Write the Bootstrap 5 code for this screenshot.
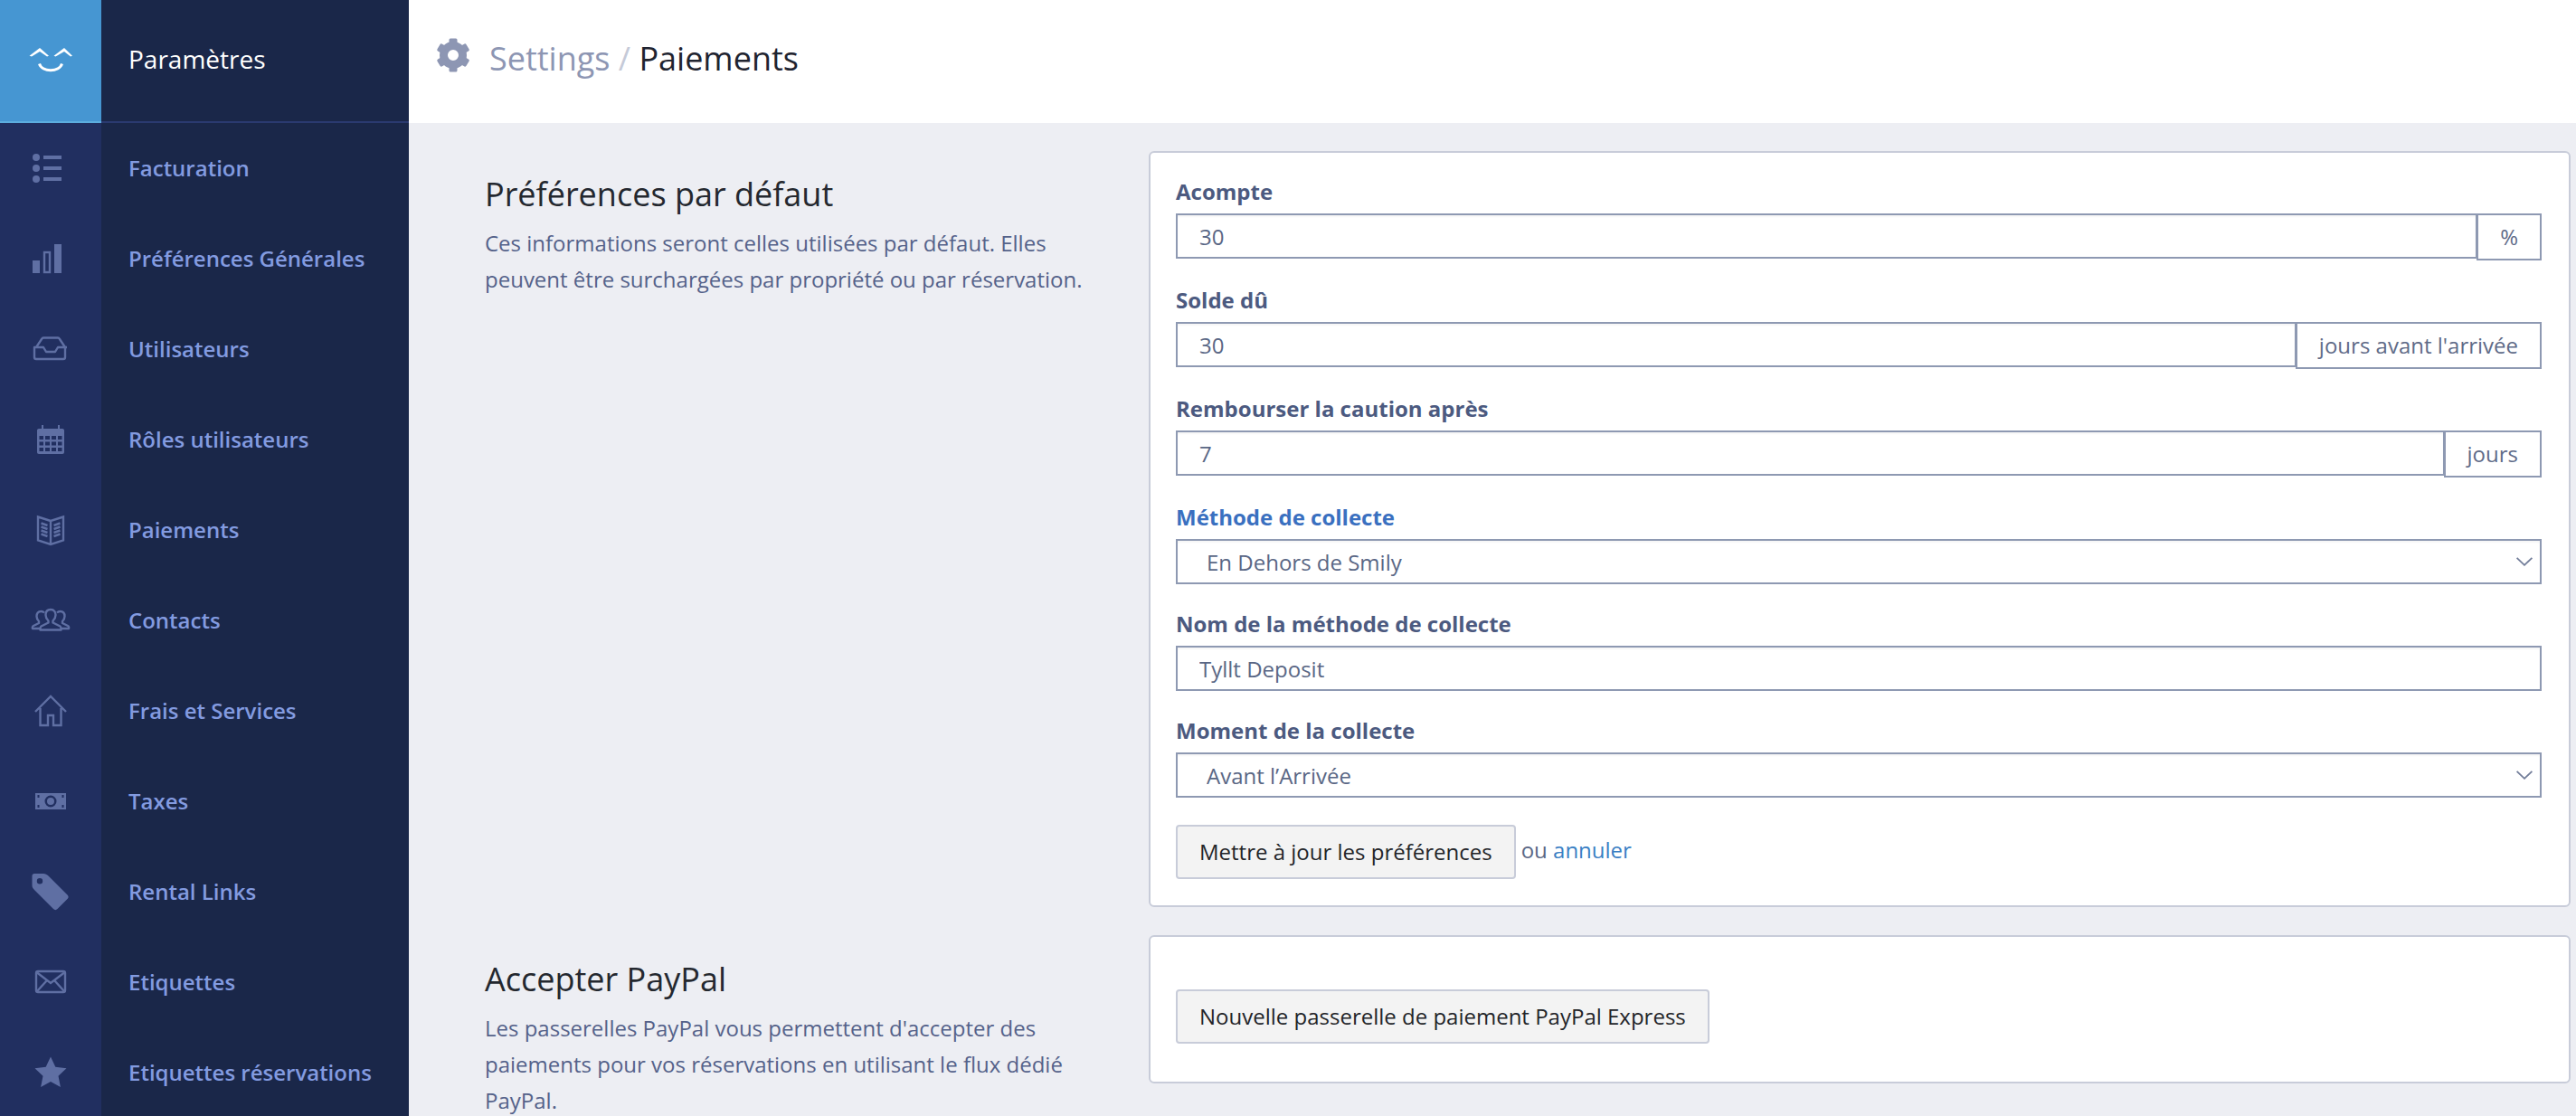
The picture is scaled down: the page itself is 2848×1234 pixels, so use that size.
<!DOCTYPE html>
<html lang="fr">
<head>
<meta charset="utf-8">
<title>Paiements</title>
<link href="https://cdn.jsdelivr.net/npm/bootstrap@5.3.0/dist/css/bootstrap.min.css" rel="stylesheet">
<style>
html,body{height:100%;}
body{font-family:"Open Sans","Liberation Sans",sans-serif;background:#edeef3;font-size:24px;color:#4c5a80;overflow:hidden;}
.app-shell{height:1234px;overflow:hidden;}
.side{width:452px;flex:0 0 452px;background:#1a2749;}
.side-top{height:136px;flex:0 0 136px;border-bottom:2px solid #2a3a70;}
.logo-box{width:112px;background:#4696d2;border-bottom:2px solid #5cadde;margin-bottom:-2px;}
.side-title{color:#fff;font-size:28px;padding-left:30px;margin-top:-4px;}
.side-row{height:100px;flex:0 0 100px;}
.rail-cell{width:112px;background:#212f60;}
.rail-cell svg{width:48px;height:48px;fill:#5f6fa3;stroke:none;}
.rail-cell svg .ln{fill:none;stroke:#5f6fa3;stroke-width:2.4;}
.side-link{color:#839be0;font-weight:600;font-size:24px;padding-left:30px;text-decoration:none;}
.topbar{height:136px;flex:0 0 136px;background:#fff;padding-left:30px;}
.crumb{font-size:36px;line-height:1;color:#8d96b3;margin-top:-6px;}
.crumb-sep{color:#c5cad8;}
.crumb-now{color:#1f2430;}
.gear{width:38px;height:38px;fill:#8d96b3;margin-right:21px;margin-top:-14px;}
.content-area{padding-top:31px;}
.sec{margin-bottom:31px;}
.sec-info{width:818px;flex:0 0 818px;padding-left:84px;padding-right:52px;}
.sec-title{font-size:36px;font-weight:400;color:#24282f;margin:26px 0 0;line-height:44px;}
.sec-text{font-size:24px;line-height:40px;color:#55628a;margin:12px 0 0;}
.sec-card{margin-right:6px;border:2px solid #c8ccd9;border-radius:6px;background:#fff;}
.form-pad{padding:25px 30px 29px 28px;}
.gate-pad{padding:58px 30px 42px 28px;}
.fld{margin-bottom:26px;}
.fld-lbl{display:block;font-weight:700;font-size:24px;line-height:36px;margin-bottom:6px;color:#4c5a80;}
.fld-lbl.on{color:#3a70c0;}
.fld .form-control,.fld .form-select{height:50px;border:2px solid #8e99b2;border-radius:0;font-size:24px;color:#5a6785;padding:0 24px;box-shadow:inset 0 2px 2px rgba(0,0,0,.04);background-color:#fff;font-family:inherit;}
.fld .form-select{padding:2px 24px 0 32px;background-position:right 8px center;background-size:18px 10px;background-image:url("data:image/svg+xml,%3csvg xmlns='http://www.w3.org/2000/svg' viewBox='0 0 18 10'%3e%3cpath fill='none' stroke='%23727d99' stroke-width='1.8' d='M.6.8 9 8.8 17.4.8'/%3e%3c/svg%3e");}
.fld .input-group{align-items:flex-start;}
.unit{height:52px;margin-left:-2px;background:#fff;border:2px solid #8e99b2;border-radius:0;color:#5f6b88;font-size:24px;padding:0 24px;display:flex;align-items:center;}
.act-row{margin-top:30px;}
.fld.last{margin-bottom:0;}
.act-btn{height:60px;background:#f3f3f3;border:2px solid #c8ccd9;border-radius:4px;color:#232529;font-size:24px;padding:0 24px;}
.ou{color:#5a6785;margin-left:6px;margin-top:-4px;}
.ou a{color:#3a80c4;text-decoration:none;}
.sec-shift{margin-top:27px;}
</style>
</head>
<body>
<div class="app-shell d-flex">
  <aside class="side d-flex flex-column">
    <div class="side-top d-flex">
      <div class="logo-box d-flex align-items-center justify-content-center">
        <svg width="48" height="30" viewBox="28 50 48 30" fill="#fff"><path d="M28.500 59.800 40 51l10 8.800-2 .6L40 55l-9 5.400zM55.500 59.800 67 51l9 8.800-2 .6-7-5.400-9.500 5.400z"/><path fill="none" stroke="#fff" stroke-width="3" d="M39.500 68.500c3 9.500 22 9.500 25 0"/></svg>
      </div>
      <div class="side-title d-flex align-items-center">Paramètres</div>
    </div>
    <div class="side-row d-flex"><div class="rail-cell d-flex align-items-center justify-content-center"><svg viewBox="0 0 48 48"><circle cx="8" cy="12" r="4"/><circle cx="8" cy="24" r="4"/><circle cx="8" cy="36" r="4"/><rect x="16" y="10" width="20" height="4"/><rect x="16" y="22" width="20" height="4"/><rect x="16" y="34" width="20" height="4"/></svg></div><a class="side-link d-flex align-items-center" href="#">Facturation</a></div>
    <div class="side-row d-flex"><div class="rail-cell d-flex align-items-center justify-content-center"><svg viewBox="0 0 48 48"><rect x="4" y="26" width="8" height="14"/><rect class="ln" x="17" y="17" width="6" height="22"/><rect x="28" y="8" width="8" height="32"/></svg></div><a class="side-link d-flex align-items-center" href="#">Préférences Générales</a></div>
    <div class="side-row d-flex"><div class="rail-cell d-flex align-items-center justify-content-center"><svg viewBox="0 0 48 48"><path class="ln" d="M8 22l6-9c.5-1 1-1.500 2-1.500h16c1 0 1.500.5 2 1.500l6 9v11c0 1-.8 2-2 2H8c-1.200 0-2-1-2-2V22zm-2 0h10l3 5h10l3-5h10" stroke-linejoin="round"/></svg></div><a class="side-link d-flex align-items-center" href="#">Utilisateurs</a></div>
    <div class="side-row d-flex"><div class="rail-cell d-flex align-items-center justify-content-center"><svg viewBox="0 0 48 48"><path d="M14 8h2v5h-2zM32 8h2v5h-2z"/><path d="M11 12h26c1.500 0 2 1 2 2v24c0 1.200-.8 2-2 2H11c-1.200 0-2-.8-2-2V14c0-1 .5-2 2-2zm.5 8v4h4.500v-4zm6.500 0v4h5v-4zm7 0v4h5v-4zm7 0v4h4.500v-4zm-20.500 6.500v4h4.500v-4zm6.500 0v4h5v-4zm7 0v4h5v-4zm7 0v4h4.500v-4zm-20.500 6.500v4h4.500v-4zm6.500 0v4h5v-4zm7 0v4h5v-4zm7 0v4h4.500v-4z" fill-rule="evenodd"/></svg></div><a class="side-link d-flex align-items-center" href="#">Rôles utilisateurs</a></div>
    <div class="side-row d-flex"><div class="rail-cell d-flex align-items-center justify-content-center"><svg viewBox="0 0 48 48"><path class="ln" d="M24 14 10 9.500v26L24 40l14-4.500v-26L24 14zm0 0v26" stroke-width="2"/><path class="ln" d="M13.500 16.500l7 2.500M13.500 20.500l7 2.500M13.500 24.500l7 2.500M13.500 28.500l7 2.500M34.500 16.500l-7 2.500M34.500 20.500l-7 2.500M34.500 24.500l-7 2.500M34.500 28.500l-7 2.500" stroke-width="1.800"/></svg></div><a class="side-link d-flex align-items-center" href="#">Paiements</a></div>
    <div class="side-row d-flex"><div class="rail-cell d-flex align-items-center justify-content-center"><svg viewBox="0 0 48 48"><path class="ln" stroke-width="2" stroke-linejoin="round" d="M24 12c-4 0-5.500 3-5.500 6 0 3 1.500 5 3 6.500v2l-8 4c-1 .5-1 2-1 4h23c0-2 0-3.500-1-4l-8-4v-2c1.500-1.500 3-3.500 3-6.500 0-3-1.500-6-5.500-6z"/><path class="ln" stroke-width="2" stroke-linejoin="round" d="M17 15.500c-1-1-2-1.500-3.500-1.500-3.500 0-5 2.500-5 5.500 0 2.500 1 4 2.500 5.500v2l-6 3c-1 .5-1.500 2-1 3h9M31 15.500c1-1 2-1.500 3.500-1.500 3.500 0 5 2.500 5 5.500 0 2.500-1 4-2.500 5.500v2l6 3c1 .5 1.500 2 1 3h-9"/></svg></div><a class="side-link d-flex align-items-center" href="#">Contacts</a></div>
    <div class="side-row d-flex"><div class="rail-cell d-flex align-items-center justify-content-center"><svg viewBox="0 0 48 48"><path class="ln" stroke-width="2.200" d="M7 25 24 8l17 17M12.500 21v19H21V29h6v11h8.500V21"/></svg></div><a class="side-link d-flex align-items-center" href="#">Frais et Services</a></div>
    <div class="side-row d-flex"><div class="rail-cell d-flex align-items-center justify-content-center"><svg viewBox="0 0 48 48"><path fill-rule="evenodd" d="M7 15h34v18H7zm17 2.500a6.500 6.500 0 1 0 0 13 6.500 6.500 0 0 0 0-13zm0 2.500a4 4 0 1 1 0 8 4 4 0 0 1 0-8zM9.500 17v3h2v-3zm27 0v3h2v-3zM9.500 28v3h2v-3zm27 0v3h2v-3z"/></svg></div><a class="side-link d-flex align-items-center" href="#">Taxes</a></div>
    <div class="side-row d-flex"><div class="rail-cell d-flex align-items-center justify-content-center"><svg viewBox="0 0 48 48"><path fill-rule="evenodd" d="M6 4h10c2 0 4 1 5.500 2.500l21 21c1.500 1.500 1.500 3 0 4.500l-11 11c-1.500 1.500-3 1.500-4.500 0l-21-21C4.500 20.500 3.500 19 3.500 17V6.500C3.500 5 4.500 4 6 4zm6 5a3.200 3.200 0 1 0 0 6.400A3.200 3.200 0 0 0 12 9z"/></svg></div><a class="side-link d-flex align-items-center" href="#">Rental Links</a></div>
    <div class="side-row d-flex"><div class="rail-cell d-flex align-items-center justify-content-center"><svg viewBox="0 0 48 48"><rect class="ln" x="8" y="12" width="32" height="23" rx="2"/><path class="ln" stroke-width="2" d="M9 13.500 24 25l15-11.500M9 34l11-12M39 34 28 22"/></svg></div><a class="side-link d-flex align-items-center" href="#">Etiquettes</a></div>
    <div class="side-row d-flex"><div class="rail-cell d-flex align-items-center justify-content-center"><svg viewBox="0 0 48 48"><path d="M24 6.500l5.300 11.300 12.200 1.500-9 8.400 2.400 12.300L24 34l-10.900 6 2.400-12.300-9-8.400 12.200-1.500z"/></svg></div><a class="side-link d-flex align-items-center" href="#">Etiquettes réservations</a></div>
  </aside>
  <div class="flex-grow-1 d-flex flex-column">
    <header class="topbar d-flex align-items-center">
      <svg class="gear" viewBox="-19 -19 38 38"><circle r="10.500" fill="none" stroke="#8d96b3" stroke-width="9"/><g><rect x="-4.500" y="-18.500" width="9" height="8" rx="1.500"/><rect x="-4.500" y="-18.500" width="9" height="8" rx="1.500" transform="rotate(60)"/><rect x="-4.500" y="-18.500" width="9" height="8" rx="1.500" transform="rotate(120)"/><rect x="-4.500" y="-18.500" width="9" height="8" rx="1.500" transform="rotate(180)"/><rect x="-4.500" y="-18.500" width="9" height="8" rx="1.500" transform="rotate(240)"/><rect x="-4.500" y="-18.500" width="9" height="8" rx="1.500" transform="rotate(300)"/></g></svg>
      <div class="crumb">Settings <span class="crumb-sep">/</span> <span class="crumb-now">Paiements</span></div>
    </header>
    <main class="content-area">
      <section class="sec d-flex">
        <div class="sec-info">
          <h2 class="sec-title">Préférences par défaut</h2>
          <p class="sec-text">Ces informations seront celles utilisées par défaut. Elles peuvent être surchargées par propriété ou par réservation.</p>
        </div>
        <div class="sec-card flex-grow-1 form-pad">
          <form>
            <div class="fld"><label class="fld-lbl" for="f1">Acompte</label><div class="input-group"><input id="f1" class="form-control" value="30"><span class="unit">%</span></div></div>
            <div class="fld"><label class="fld-lbl" for="f2">Solde dû</label><div class="input-group"><input id="f2" class="form-control" value="30"><span class="unit">jours avant l'arrivée</span></div></div>
            <div class="fld"><label class="fld-lbl" for="f3">Rembourser la caution après</label><div class="input-group"><input id="f3" class="form-control" value="7"><span class="unit">jours</span></div></div>
            <div class="fld"><label class="fld-lbl on" for="f4">Méthode de collecte</label><select id="f4" class="form-select"><option>En Dehors de Smily</option></select></div>
            <div class="fld"><label class="fld-lbl" for="f5">Nom de la méthode de collecte</label><input id="f5" class="form-control" value="Tyllt Deposit"></div>
            <div class="fld last"><label class="fld-lbl" for="f6">Moment de la collecte</label><select id="f6" class="form-select"><option>Avant l’Arrivée</option></select></div>
            <div class="act-row d-flex align-items-center"><button type="button" class="btn act-btn">Mettre à jour les préférences</button><span class="ou">ou <a href="#">annuler</a></span></div>
          </form>
        </div>
      </section>
      <section class="sec d-flex">
        <div class="sec-info">
          <h2 class="sec-title sec-shift">Accepter PayPal</h2>
          <p class="sec-text">Les passerelles PayPal vous permettent d'accepter des paiements pour vos réservations en utilisant le flux dédié PayPal.</p>
        </div>
        <div class="sec-card flex-grow-1 gate-pad align-self-start">
          <button type="button" class="btn act-btn">Nouvelle passerelle de paiement PayPal Express</button>
        </div>
      </section>
    </main>
  </div>
</div>
<script src="https://cdn.jsdelivr.net/npm/bootstrap@5.3.0/dist/js/bootstrap.bundle.min.js"></script>
</body>
</html>
